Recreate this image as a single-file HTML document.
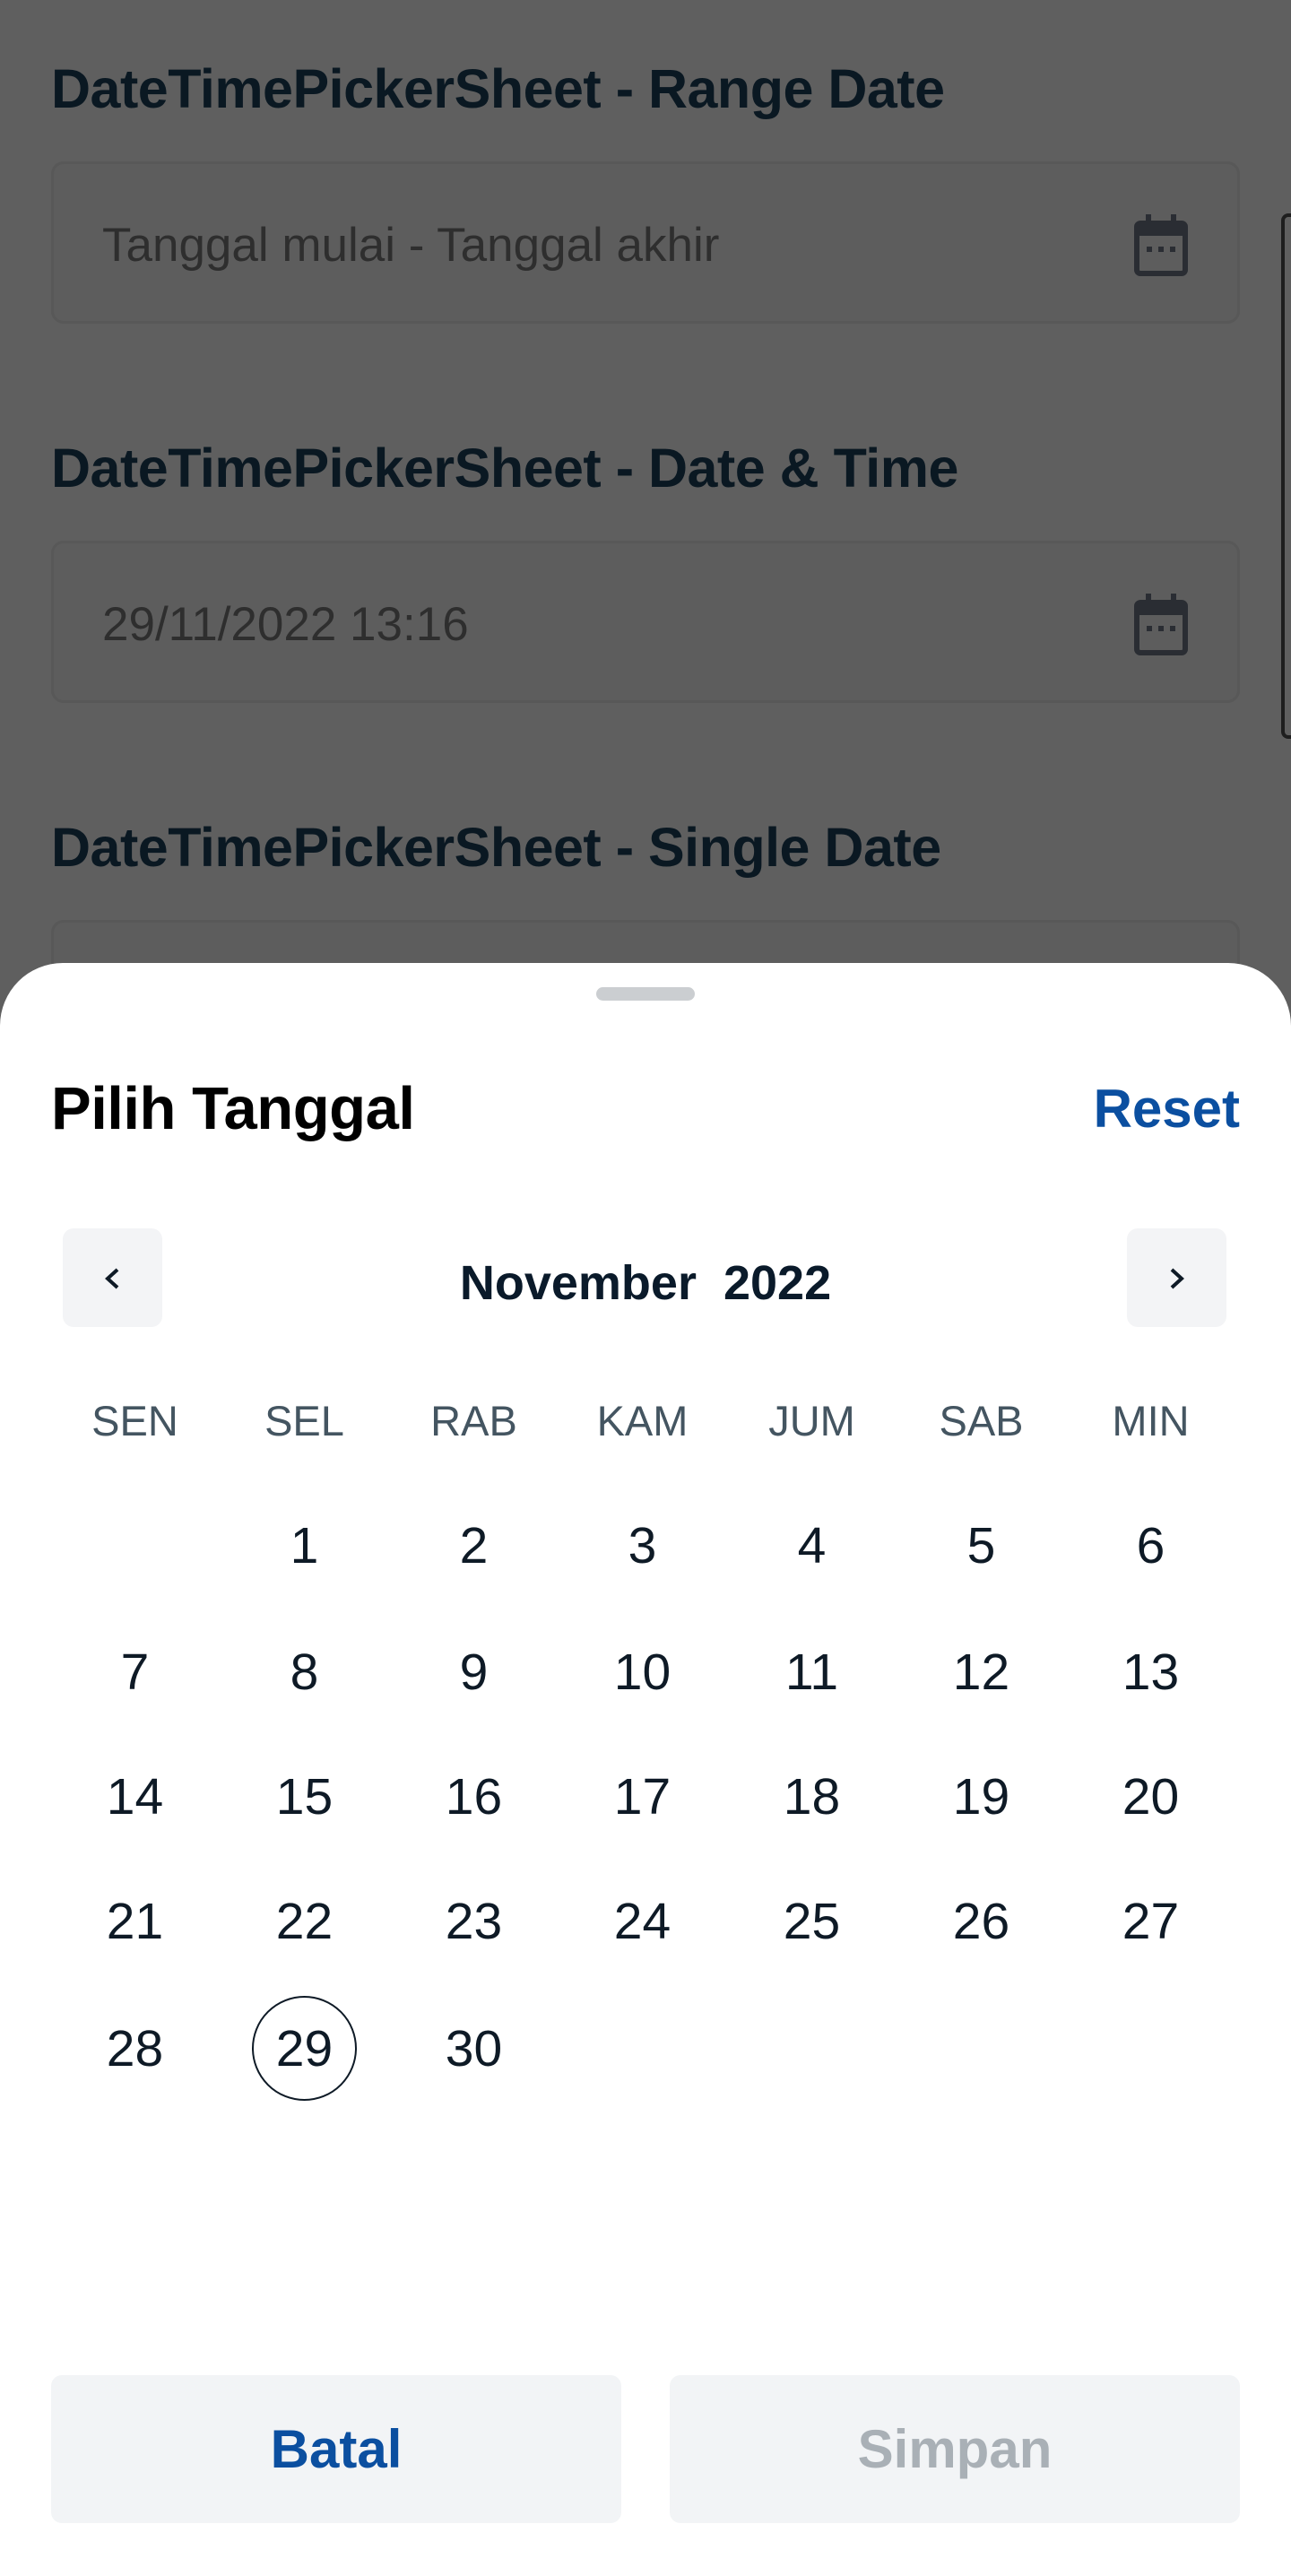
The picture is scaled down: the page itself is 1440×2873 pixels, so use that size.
<!DOCTYPE html>
<html><head><meta charset="utf-8"><style>
*{margin:0;padding:0;box-sizing:border-box}
body{width:1440px;height:2873px;position:relative;overflow:hidden;background:#5f5f5f;font-family:"Liberation Sans",sans-serif}
.h{position:absolute;left:57px;font-size:61px;font-weight:bold;color:#0a1822;letter-spacing:-0.5px}
.in{position:absolute;left:57px;width:1326px;height:181px;border:3px solid #585858;border-radius:14px;background:#5d5d5d}
.in span{position:absolute;left:54px;top:60px;font-size:53px;color:#2e2e2e}
.cal{position:absolute;right:54px;top:56px}
.sb{position:absolute;left:1429px;top:238px;width:14px;height:586px;border:4px solid #1e1e1e;border-right:none;border-radius:8px 0 0 8px}
.sheet{position:absolute;left:0;top:1074px;width:1440px;height:1799px;background:#fff;border-radius:70px 70px 0 0}
.handle{position:absolute;left:665px;top:27px;width:110px;height:15px;border-radius:8px;background:#cbced1}
.t{position:absolute;left:57px;top:124px;font-size:67px;font-weight:bold;color:#000;letter-spacing:-0.5px}
.r{position:absolute;right:57px;top:128px;font-size:60px;font-weight:bold;color:#0b4fa0}
.nav{position:absolute;top:296px;width:111px;height:110px;border-radius:12px;background:#f3f4f6}
.m{position:absolute;left:0;width:1440px;top:326px;text-align:center;font-size:54px;font-weight:bold;color:#0a1a2a}
.c{position:absolute;width:189px;margin-left:-94px;text-align:center}
.w{font-size:47px;color:#445561}
.d{font-size:57px;color:#0e1a26}
.sel{position:absolute;width:117px;height:117px;border:2.5px solid #0e1a26;border-radius:50%}
.b{position:absolute;top:1575px;width:636px;height:165px;border-radius:12px;background:#f2f4f6;text-align:center;line-height:165px;font-size:60px;font-weight:bold}
</style></head><body>
<div class="h" style="top:64px">DateTimePickerSheet - Range Date</div>
<div class="in" style="top:180px"><span>Tanggal mulai - Tanggal akhir</span>
<svg class="cal" width="62" height="70" viewBox="0 0 62 70"><rect x="4" y="10" width="54" height="56" rx="4" fill="none" stroke="#2a2d33" stroke-width="6"/><rect x="4" y="10" width="54" height="14" fill="#2a2d33"/><rect x="14" y="0" width="6" height="14" fill="#2a2d33"/><rect x="42" y="0" width="6" height="14" fill="#2a2d33"/><rect x="15" y="36" width="6" height="6" fill="#2a2d33"/><rect x="28" y="36" width="6" height="6" fill="#2a2d33"/><rect x="41" y="36" width="6" height="6" fill="#2a2d33"/></svg></div>
<div class="h" style="top:487px">DateTimePickerSheet - Date &amp; Time</div>
<div class="in" style="top:603px"><span>29/11/2022 13:16</span>
<svg class="cal" width="62" height="70" viewBox="0 0 62 70"><rect x="4" y="10" width="54" height="56" rx="4" fill="none" stroke="#2a2d33" stroke-width="6"/><rect x="4" y="10" width="54" height="14" fill="#2a2d33"/><rect x="14" y="0" width="6" height="14" fill="#2a2d33"/><rect x="42" y="0" width="6" height="14" fill="#2a2d33"/><rect x="15" y="36" width="6" height="6" fill="#2a2d33"/><rect x="28" y="36" width="6" height="6" fill="#2a2d33"/><rect x="41" y="36" width="6" height="6" fill="#2a2d33"/></svg></div>
<div class="h" style="top:910px">DateTimePickerSheet - Single Date</div>
<div class="in" style="top:1026px"></div>
<div class="sb"></div>
<div class="sheet">
<div class="handle"></div>
<div class="t">Pilih Tanggal</div>
<div class="r">Reset</div>
<div class="nav" style="left:70px"><svg width="111" height="110"><path d="M61 46 L50 56 L61 66" fill="none" stroke="#0e1a26" stroke-width="4"/></svg></div>
<div class="nav" style="left:1257px"><svg width="111" height="110"><path d="M50 46 L61 56 L50 66" fill="none" stroke="#0e1a26" stroke-width="4"/></svg></div>
<div class="m">November&nbsp; 2022</div>
<div class="sel" style="left:281px;top:1152px"></div>
<div id="g"></div>
<div class="b" style="left:57px;color:#0b4fa0">Batal</div>
<div class="b" style="left:747px;color:#a9b0b6">Simpan</div>
</div>
<script>
var xs=[150,339,528,716,905,1094,1283],wd=["SEN","SEL","RAB","KAM","JUM","SAB","MIN"],s="";
wd.forEach(function(w,i){s+='<div class="c w" style="left:'+xs[i]+'px;top:483px">'+w+'</div>'});
var ys=[617,758,897,1036,1178];
for(var d=1;d<=30;d++){var r=Math.floor(d/7),c=d%7;s+='<div class="c d" style="left:'+xs[c]+'px;top:'+ys[r]+'px">'+d+'</div>'}
document.getElementById('g').innerHTML=s;
</script>
</body></html>
